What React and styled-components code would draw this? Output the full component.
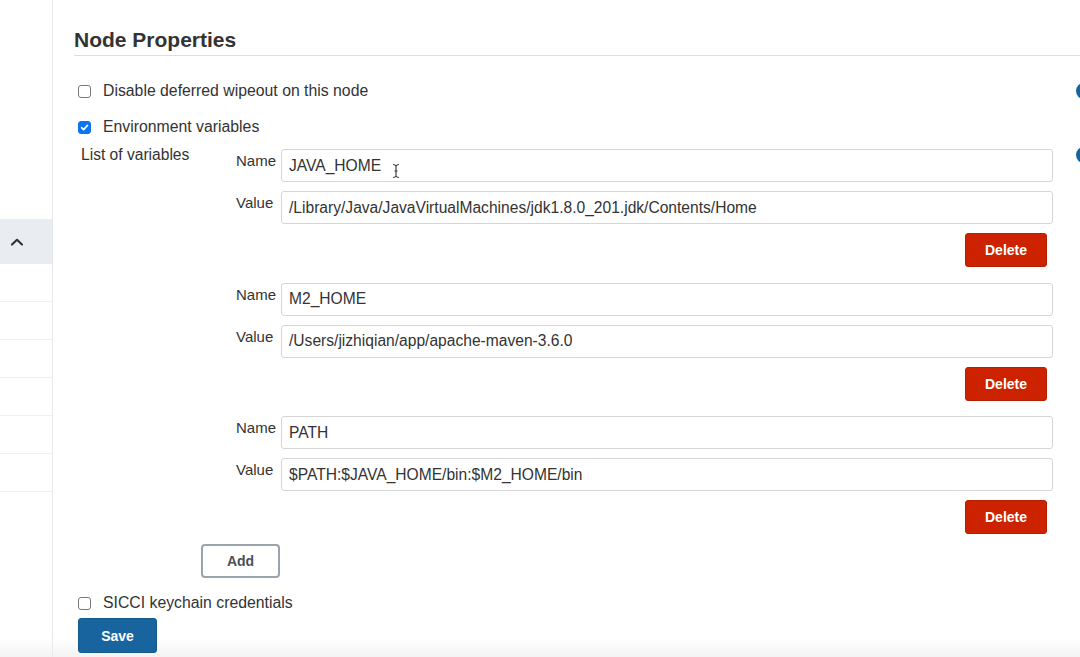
import React from "react";
import styled, { createGlobalStyle } from "styled-components";

const Global = createGlobalStyle`
  html, body { margin: 0; padding: 0; background: #fff; }
  body {
    width: 1080px; height: 657px; overflow: hidden;
    font-family: "Liberation Sans", Arial, sans-serif;
    color: #333;
  }
`;

const Page = styled.div`
  display: flex;
  height: 657px;
  position: relative;
`;

const Sidebar = styled.aside`
  width: 53px;
  flex: none;
  border-right: 1px solid #e6e8eb;
  padding-top: 219px;
  box-sizing: border-box;
`;

const SideActive = styled.div`
  height: 45px;
  background: #e9edf1;
  display: flex;
  align-items: center;
  justify-content: flex-end;
  padding-right: 28px;
`;

const SideRow = styled.div`
  height: 38px;
  border-bottom: 1px solid #eef0f3;
  box-sizing: border-box;
`;

const Main = styled.main`
  flex: 1;
  padding: 26px 0 0 21px;
  min-width: 0;
`;

const Heading = styled.h2`
  margin: 0;
  font-size: 21px;
  font-weight: 700;
  color: #333;
  line-height: 27px;
  padding-bottom: 2px;
  border-bottom: 1px solid #dedede;
`;

const Row = styled.div`
  display: flex;
  align-items: center;
  justify-content: space-between;
  height: ${(p) => p.$h || 36}px;
  margin-top: ${(p) => p.$mt || 0}px;
`;

const CheckLabel = styled.label`
  display: flex;
  align-items: center;
  gap: 12px;
  font-size: 15.8px;
  color: #333;
  padding-left: 4px;
`;

const Box = styled.span`
  width: 13px;
  height: 13px;
  box-sizing: border-box;
  border-radius: 3px;
  border: 1px solid ${(p) => (p.$checked ? "#0a75ef" : "#7a7a7a")};
  background: ${(p) => (p.$checked ? "#0a75ef" : "#fff")};
  display: flex;
  align-items: center;
  justify-content: center;
`;

const Help = styled.span`
  width: 16px;
  height: 16px;
  border-radius: 50%;
  background: #1466a3;
  margin-right: -12px;
  flex: none;
  align-self: ${(p) => (p.$top ? "flex-start" : "center")};
  margin-top: ${(p) => (p.$top ? "-2px" : "0")};
`;

const ListSection = styled.div`
  display: flex;
  align-items: flex-start;
  justify-content: space-between;
  margin-top: 4px;
`;

const ListInner = styled.div`
  display: flex;
  flex: 1;
`;

const ListLabel = styled.div`
  width: 155px;
  flex: none;
  padding-left: 7px;
  font-size: 15.6px;
  line-height: 18px;
  margin-top: -3px;
`;

const Entries = styled.div`
  flex: 1;
  margin-right: 23px;
  display: flex;
  flex-direction: column;
  gap: 15.5px;
`;

const Entry = styled.div`
  display: grid;
  grid-template-columns: 45px 1fr;
  row-gap: 9px;
`;

const FieldLabel = styled.div`
  font-size: 15px;
  line-height: 18px;
  color: #333;
  padding-top: 3px;
`;

const InputWrap = styled.div`
  position: relative;
`;

const Input = styled.input`
  width: 100%;
  box-sizing: border-box;
  height: 33px;
  border: 1px solid #d6d6d6;
  border-radius: 3px;
  padding: 0 7px;
  font-family: "Liberation Sans", Arial, sans-serif;
  font-size: 15.6px;
  color: #333;
  background: #fff;
  outline: none;
`;

const Cursor = styled.svg`
  position: absolute;
  left: 111px;
  top: 14px;
`;

const Actions = styled.div`
  grid-column: 1 / -1;
  display: flex;
  justify-content: flex-end;
  padding-right: 6px;
`;

const Button = styled.button`
  position: relative;
  z-index: 1;
  height: ${(p) => p.$h || 34}px;
  width: ${(p) => p.$w || 82}px;
  border-radius: 3px;
  font-family: "Liberation Sans", Arial, sans-serif;
  font-size: 14px;
  font-weight: 700;
  cursor: pointer;
  box-sizing: border-box;
  ${(p) =>
    p.$variant === "danger"
      ? `background:#cc2200;color:#fff;border:1px solid #b81e00;`
      : p.$variant === "primary"
      ? `background:#18649e;color:#fff;border:1px solid #145a8e;`
      : `background:#fff;color:#4a5056;border:2px solid #9ba4ad;border-radius:4px;`}
`;

const AddRow = styled.div`
  margin-top: 10px;
  padding-left: 127px;
`;

const Footer = styled.div`
  margin-top: 0;
  padding-left: 4px;
`;

const Fade = styled.div`
  position: absolute;
  left: 0;
  right: 0;
  bottom: 0;
  height: 18px;
  background: linear-gradient(to bottom, rgba(240,240,240,0), rgba(238,238,238,0.7));
  pointer-events: none;
`;

const Check = () => (
  <svg width="9" height="9" viewBox="0 0 10 10">
    <path d="M1.8 5.2 L4 7.4 L8.3 2.6" fill="none" stroke="#fff" strokeWidth="1.9" strokeLinecap="round" strokeLinejoin="round" />
  </svg>
);

const Chevron = () => (
  <svg width="14" height="10" viewBox="0 0 14 10">
    <path d="M2 7.5 L7 2.8 L12 7.5" fill="none" stroke="#333" strokeWidth="2.2" strokeLinecap="round" strokeLinejoin="round" />
  </svg>
);

const vars = [
  { name: "JAVA_HOME", value: "/Library/Java/JavaVirtualMachines/jdk1.8.0_201.jdk/Contents/Home", cursor: true },
  { name: "M2_HOME", value: "/Users/jizhiqian/app/apache-maven-3.6.0" },
  { name: "PATH", value: "$PATH:$JAVA_HOME/bin:$M2_HOME/bin" },
];

export default function App() {
  return (
    <>
      <Global />
      <Page>
        <Sidebar>
          <SideActive>
            <Chevron />
          </SideActive>
          {[0, 1, 2, 3, 4, 5].map((i) => (
            <SideRow key={i} />
          ))}
        </Sidebar>
        <Main>
          <Heading>Node Properties</Heading>
          <Row $mt={17}>
            <CheckLabel>
              <Box />
              Disable deferred wipeout on this node
            </CheckLabel>
            <Help />
          </Row>
          <Row>
            <CheckLabel>
              <Box $checked>
                <Check />
              </Box>
              Environment variables
            </CheckLabel>
          </Row>
          <ListSection>
            <ListInner>
              <ListLabel>List of variables</ListLabel>
              <Entries>
                {vars.map((v) => (
                  <Entry key={v.name}>
                    <FieldLabel>Name</FieldLabel>
                    <InputWrap>
                      <Input defaultValue={v.name} />
                      {v.cursor && (
                        <Cursor width="8" height="16" viewBox="0 0 8 16">
                          <path d="M1 1.5 Q3 1.5 4 3 Q5 1.5 7 1.5 M4 3 L4 13 M1 14.5 Q3 14.5 4 13 Q5 14.5 7 14.5 M2.5 8 L5.5 8" fill="none" stroke="#333" strokeWidth="1.1" />
                        </Cursor>
                      )}
                    </InputWrap>
                    <FieldLabel>Value</FieldLabel>
                    <InputWrap>
                      <Input defaultValue={v.value} />
                    </InputWrap>
                    <Actions>
                      <Button $variant="danger">Delete</Button>
                    </Actions>
                  </Entry>
                ))}
              </Entries>
            </ListInner>
            <Help $top />
          </ListSection>
          <AddRow>
            <Button $w={79} $h={34}>Add</Button>
          </AddRow>
          <Row $mt={10} $h={30}>
            <CheckLabel>
              <Box />
              SICCI keychain credentials
            </CheckLabel>
          </Row>
          <Footer>
            <Button $variant="primary" $w={79} $h={35}>Save</Button>
          </Footer>
        </Main>
        <Fade />
      </Page>
    </>
  );
}
